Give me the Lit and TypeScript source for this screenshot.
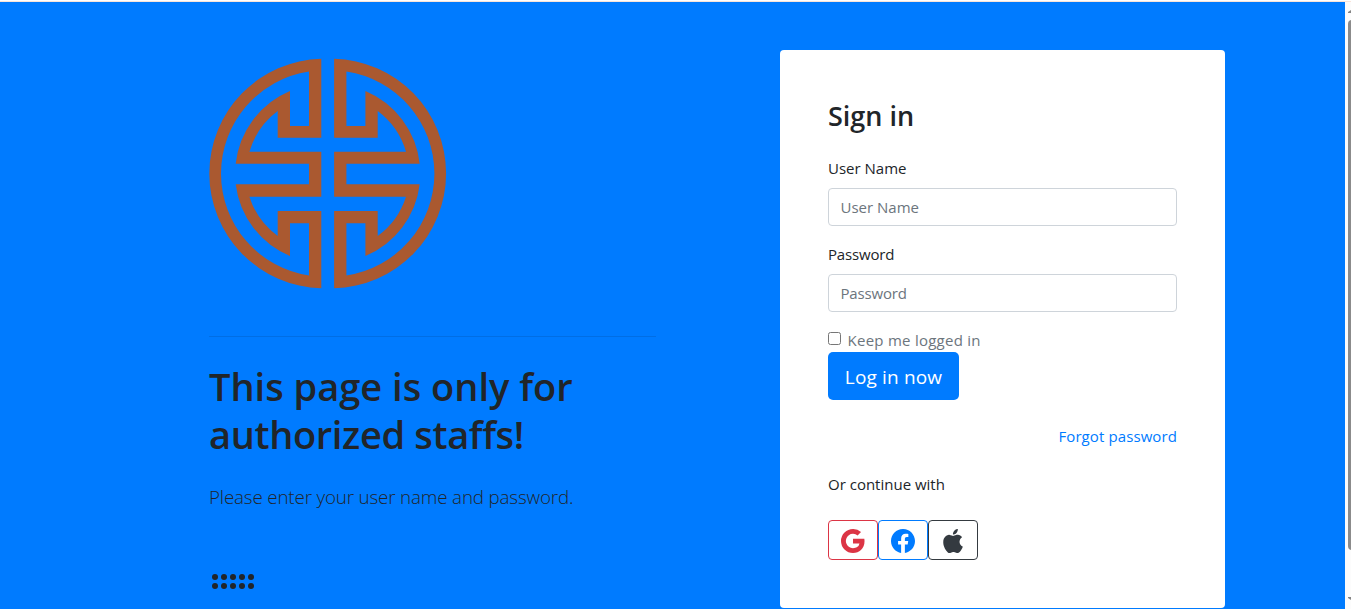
import { LitElement, html, css, svg } from "lit";
import { customElement } from "lit/decorators.js";

const halfEmblem = svg`<path fill-rule="evenodd" d="M112.3 .7V79.7H68.7V53A78 78 0 0 0 40.4 93.7H112.3V138.7H40.4A78 78 0 0 0 68.7 178V153H112.3V230.3A115 115 0 0 1 .3 115.5A115 115 0 0 1 112.3 .7ZM100 13.6V68H81V33A89.5 89.5 0 0 0 26.7 105.7H100V126.3H26.7A89.5 89.5 0 0 0 81 198V165.3H100V217.5A103.3 103.3 0 0 1 12 115.5A103.3 103.3 0 0 1 100 13.6Z"/>`;

@customElement("app-root")
export class AppRoot extends LitElement {
  static styles = css`
    :host {
      display: block;
      height: 609px;
      overflow: hidden;
      font-family: "Open Sans", "Noto Sans", sans-serif;
      font-size: 15px;
      line-height: 24px;
      color: #212529;
    }
    * { box-sizing: border-box; }
    .window { display: grid; grid-template-columns: 1345px 6px; grid-template-rows: 2px 607px; }
    .edge { grid-column: 1 / 3; background: #f8e4da; border-top: 1px solid #fff; }
    .page {
      background: #007bff;
      display: grid;
      grid-template-columns: 447px 445px;
      column-gap: 124px;
      padding: 48px 0 0 209px;
      align-items: start;
    }
    .intro { padding-top: 8px; }
    .emblem { display: block; width: 238px; height: 231px; fill: #aa5930; }
    .rule { height: 1px; background: rgba(0, 0, 0, 0.1); margin: 47px 0 25px; }
    .headline { margin: 0; font-size: 38px; line-height: 48px; font-weight: 600; }
    .tight { letter-spacing: -0.35px; }
    .lead { margin: 24px 0 0; font-size: 18.75px; line-height: 30px; font-weight: 300; letter-spacing: -0.15px; }
    .dots { display: block; width: 48px; height: 20px; margin-top: 59px; fill: #212529; }
    .card { background: #fff; border-radius: 4px; height: 558px; padding: 49px 48px 48px; }
    .title { margin: 0 0 23px; font-size: 27px; line-height: 34px; font-weight: 600; }
    .label { display: block; margin-bottom: 8px; }
    .input {
      display: block; width: 100%; height: 38px; padding: 6px 11.5px; margin-bottom: 16px;
      border: 1px solid #ced4da; border-radius: 4px; background: #fff;
      font: inherit; color: #495057; outline: none;
    }
    .input::placeholder { color: #6c757d; opacity: 1; }
    .narrow { letter-spacing: -0.18px; }
    .keep { display: flex; align-items: center; height: 24px; color: #6c757d; letter-spacing: 0.26px; }
    .check { width: 13px; height: 13px; margin: 0 6.5px 4px 0; }
    .submit {
      display: block; width: 131px; height: 48px; padding: 2px 0 0; border: 0; border-radius: 5px;
      background: #007bff; color: #fff; font: inherit; font-size: 19px; line-height: 46px; letter-spacing: 0.15px;
    }
    .forgot { display: block; margin-top: 24px; text-align: right; color: #007bff; text-decoration: none; letter-spacing: 0.1px; }
    .or { margin: 24px 0; }
    .social { display: flex; }
    .provider {
      display: flex; align-items: center; justify-content: center; width: 50px; height: 40px;
      padding: 0; border: 1px solid currentColor; border-radius: 4px; background: transparent;
    }
    .google { color: #dc3545; }
    .facebook { color: #007bff; }
    .apple { color: #343a40; }
    .icon { width: 24px; height: 24px; fill: currentColor; margin-top: 2px; }
    .scroll { background: #fcfcfc; display: flex; flex-direction: column; padding-left: 3px; overflow: hidden; }
    .arrow { display: block; width: 3px; height: 3px; fill: #858585; }
    .up { margin-top: 8px; }
    .thumb { width: 8px; height: 530px; margin: 7px 0 47px; border-radius: 4px; background: #8b8b8b; }
  `;

  render() {
    return html`
      <div class="window">
        <div class="edge"></div>
        <main class="page">
          <section class="intro">
            <svg class="emblem" viewBox="0 0 238 231">
              ${halfEmblem}
              <g transform="translate(237.4 0) scale(-1 1)">${halfEmblem}</g>
            </svg>
            <div class="rule"></div>
            <h1 class="headline">This page is only for<br /><span class="tight">authorized staffs!</span></h1>
            <p class="lead">Please enter your user name and password.</p>
            <svg class="dots" viewBox="0 0 48 20">
              ${[6, 15, 24, 33, 42].map(
                (x) => svg`<circle cx=${x} cy="6" r="3"/><circle cx=${x} cy="15" r="3"/>`
              )}
            </svg>
          </section>
          <form class="card">
            <h2 class="title">Sign in</h2>
            <label class="label" for="user">User Name</label>
            <input class="input" id="user" type="text" placeholder="User Name" />
            <label class="label narrow" for="pass">Password</label>
            <input class="input narrow" id="pass" type="password" placeholder="Password" />
            <label class="keep"><input class="check" type="checkbox" />Keep me logged in</label>
            <button class="submit" type="button">Log in now</button>
            <a class="forgot" href="#">Forgot password</a>
            <p class="or">Or continue with</p>
            <div class="social">
              <button class="provider google" type="button" aria-label="Google">
                <svg class="icon" viewBox="0 0 16 16"><path d="M15.545 6.558a9.42 9.42 0 0 1 .139 1.626c0 2.434-.87 4.492-2.384 5.885h.002C11.978 15.292 10.158 16 8 16A8 8 0 1 1 8 0a7.689 7.689 0 0 1 5.352 2.082l-2.284 2.284A4.347 4.347 0 0 0 8 3.166c-2.087 0-3.86 1.408-4.492 3.304a4.792 4.792 0 0 0 0 3.063h.003c.635 1.893 2.405 3.301 4.492 3.301 1.078 0 2.004-.276 2.722-.764h-.003a3.702 3.702 0 0 0 1.599-2.431H8v-3.08h7.545z"/></svg>
              </button>
              <button class="provider facebook" type="button" aria-label="Facebook">
                <svg class="icon" viewBox="0 0 16 16"><path d="M16 8.049c0-4.446-3.582-8.05-8-8.05C3.58 0-.002 3.603-.002 8.05c0 4.017 2.926 7.347 6.75 7.951v-5.625h-2.03V8.05H6.75V6.275c0-2.017 1.195-3.131 3.022-3.131.876 0 1.791.157 1.791.157v1.98h-1.009c-.993 0-1.303.621-1.303 1.258v1.51h2.218l-.354 2.326H9.25V16c3.824-.604 6.75-3.934 6.75-7.951z"/></svg>
              </button>
              <button class="provider apple" type="button" aria-label="Apple">
                <svg class="icon" viewBox="0 0 16 16"><path d="M11.182.008C11.148-.03 9.923.023 8.857 1.18c-1.066 1.156-.902 2.482-.878 2.516.024.034 1.52.087 2.475-1.258.955-1.345.762-2.391.728-2.43zm3.314 11.733c-.048-.096-2.325-1.234-2.113-3.422.212-2.189 1.675-2.789 1.698-2.854.023-.065-.597-.79-1.254-1.157a3.692 3.692 0 0 0-1.563-.434c-.108-.003-.483-.095-1.254.116-.508.139-1.653.589-1.968.607-.316.018-1.256-.522-2.267-.665-.647-.125-1.333.131-1.824.328-.49.196-1.422.754-2.074 2.237-.652 1.482-.311 3.83-.067 4.56.244.729.625 1.924 1.273 2.796.576.984 1.34 1.667 1.659 1.899.319.232 1.219.386 1.843.067.502-.308 1.408-.485 1.766-.472.357.013 1.061.154 1.782.539.571.197 1.111.115 1.652-.105.541-.221 1.324-1.059 2.238-2.758.347-.79.505-1.217.473-1.282z"/></svg>
              </button>
            </div>
          </form>
        </main>
        <div class="scroll">
          <svg class="arrow up" viewBox="0 0 3 3"><path d="M0 3V2L3 0V3Z"/></svg>
          <div class="thumb"></div>
          <svg class="arrow" viewBox="0 0 3 3"><path d="M0 0H3V3L0 1Z"/></svg>
        </div>
      </div>
    `;
  }
}
